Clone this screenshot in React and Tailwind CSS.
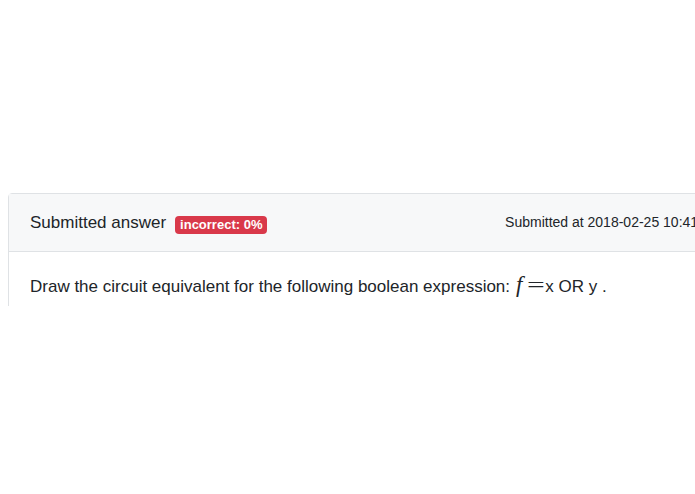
export default function App() {
  return (
    <div className="h-[494px] w-[695px] overflow-hidden bg-white font-['Liberation_Sans',Arial,sans-serif] text-[#212529]">
      <div className="h-[193px]" />
      <div className="ml-[8px] h-[113px] w-[780px] overflow-hidden">
        <div className="rounded-t border border-[#dfe2e5]">
          <div className="flex h-[58px] items-center border-b border-[#dfe2e5] bg-[#f7f8f9] pl-[21px]">
            <span className="text-[17px]">Submitted answer</span>
            <span className="mt-[4px] ml-[9px] rounded-[4px] bg-[#d9394a] px-[5px] py-[1px] text-[13px] leading-[16px] font-bold text-white">
              incorrect: 0%
            </span>
            <span className="ml-auto mr-[29px] text-[14px]">Submitted at 2018-02-25 10:41:23 (PST)</span>
          </div>
          <div className="px-[21px] pt-[21px] pb-[40px] text-[17px] leading-[24px]">
            Draw the circuit equivalent for the following boolean expression:
            <span className="ml-[6px] font-['Liberation_Serif',serif] text-[23px] leading-none italic">f</span>
            <span className="ml-[8px] mr-[3px] inline-block scale-x-150 font-['Liberation_Serif',serif] text-[21px] leading-none">=</span>
            x OR y .
          </div>
        </div>
      </div>
    </div>
  );
}
